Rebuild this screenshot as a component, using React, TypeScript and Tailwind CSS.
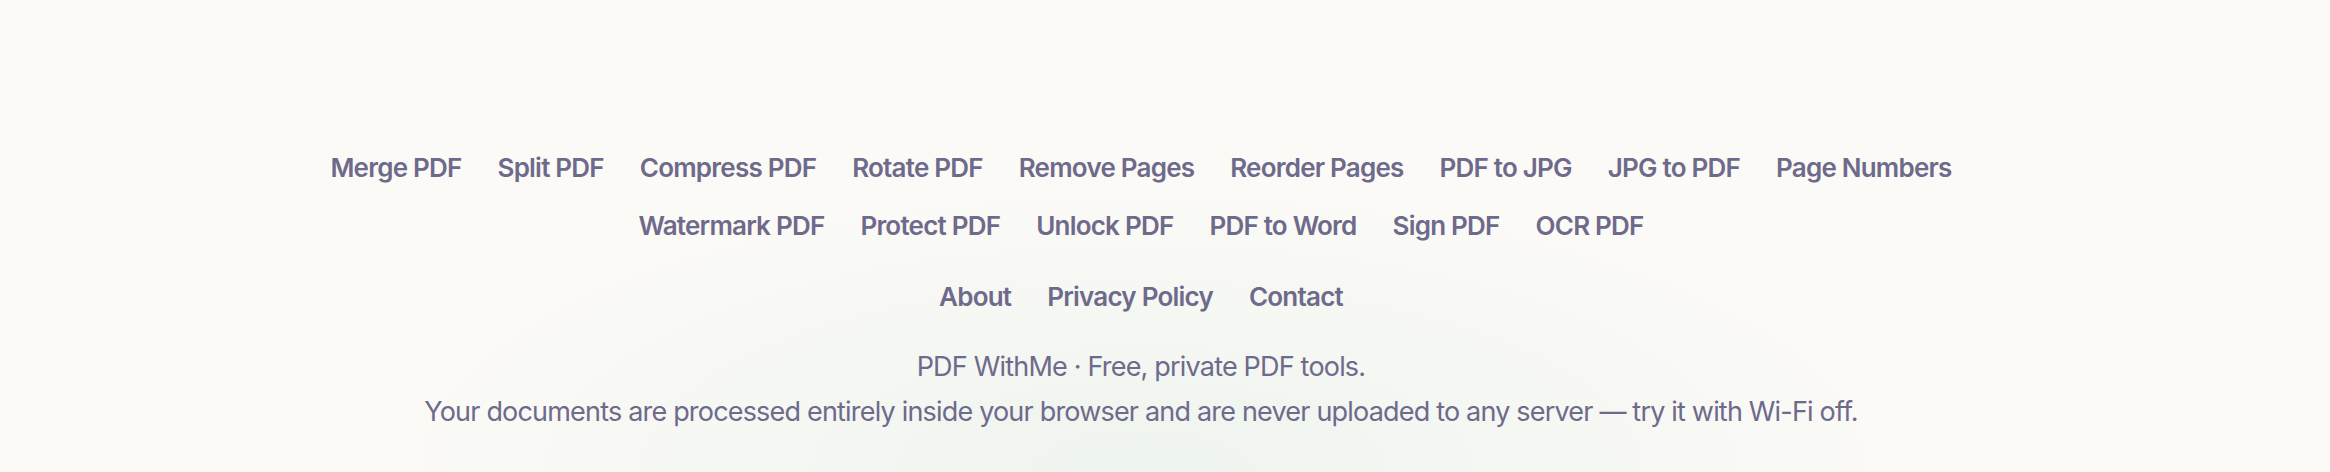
const tools = [
  "Merge PDF",
  "Split PDF",
  "Compress PDF",
  "Rotate PDF",
  "Remove Pages",
  "Reorder Pages",
  "PDF to JPG",
  "JPG to PDF",
  "Page Numbers",
  "Watermark PDF",
  "Protect PDF",
  "Unlock PDF",
  "PDF to Word",
  "Sign PDF",
  "OCR PDF",
]

const pages = ["About", "Privacy Policy", "Contact"]

export default function App() {
  return (
    <div className="min-h-screen h-[472px] overflow-hidden bg-[#fbfaf6] bg-[radial-gradient(ellipse_32%_60%_at_49%_100%,#eef4ef_0%,rgba(251,250,246,0)_100%)] pr-[48px] font-['Inter',sans-serif] text-[#6e6a8b]">
      <footer className="flex flex-col items-center pt-[152px]">
        <nav className="flex max-w-[1740px] flex-wrap justify-center gap-x-[36px] gap-y-[26px] text-[26px] leading-[32px] font-semibold tracking-[-0.03em]">
          {tools.map((t) => (
            <a key={t} href="#" className="hover:text-[#3f3c5c]">
              {t}
            </a>
          ))}
        </nav>
        <nav className="mt-[39px] flex gap-x-[36px] text-[26px] leading-[32px] font-semibold tracking-[-0.03em]">
          {pages.map((p) => (
            <a key={p} href="#" className="hover:text-[#3f3c5c]">
              {p}
            </a>
          ))}
        </nav>
        <div className="mt-[38px] flex flex-col items-center gap-[13px] text-[27px] leading-[32px] tracking-[-0.03em]">
          <p>PDF WithMe · Free, private PDF tools.</p>
          <p>
            Your documents are processed entirely inside your browser and are never uploaded to any server — try it
            with Wi-Fi off.
          </p>
        </div>
      </footer>
    </div>
  )
}
